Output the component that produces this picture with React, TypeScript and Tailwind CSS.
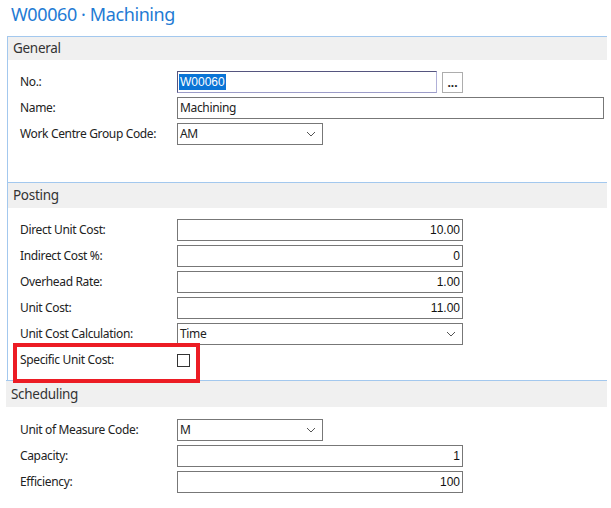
import React from "react";

const label = "text-[12px] text-[#222] font-['Noto_Sans',sans-serif] tracking-[-0.35px]";
const num = "text-[12px] text-[#111] font-['Liberation_Sans',Arial,sans-serif]";

function Chevron() {
  return (
    <svg width="10" height="6" viewBox="0 0 10 6" className="text-[#555]">
      <path d="M1 1l4 4 4-4" fill="none" stroke="currentColor" strokeWidth="1" />
    </svg>
  );
}

function Row({ text, labelW, children }: { text: string; labelW: string; children: React.ReactNode }) {
  return (
    <div className="flex items-center h-[22px]">
      <div className={`${labelW} ${label} shrink-0`}>{text}</div>
      {children}
    </div>
  );
}

function NumBox({ value }: { value: string }) {
  return (
    <div className={`w-[286px] h-[22px] border border-[#777] flex items-center justify-end pr-[2px] ${num}`}>
      {value}
    </div>
  );
}

function Select({ value, w }: { value: string; w: string }) {
  return (
    <div className={`${w} h-[22px] border border-[#777] flex items-center justify-between pl-[2px] pr-[6px]`}>
      <span className={label}>{value}</span>
      <Chevron />
    </div>
  );
}

function Header({ title, h }: { title: string; h: string }) {
  return (
    <div className={`${h} bg-[#f0f0f0] pl-[5px] flex items-center text-[13.5px] tracking-[-0.3px] text-[#333] font-['Noto_Sans',sans-serif]`}>
      {title}
    </div>
  );
}

export default function App() {
  return (
    <div className="relative w-[611px] h-[508px] bg-white overflow-hidden">
      <div className="h-[36px] pl-[11px] pt-[1px] text-[18px] tracking-[-0.4px] text-[#1f7bd4] font-['Noto_Sans',sans-serif]">
        W00060 · Machining
      </div>

      <section className="ml-[7px] w-[600px] h-[146px] border-l border-t border-[#a3c8ee]">
        <Header title="General" h="h-[23px]" />
        <div className="pt-[11px] flex flex-col gap-[4px]">
          <Row text="No.:" labelW="w-[169px] pl-[12px]">
            <div className="w-[260px] h-[22px] border border-[#55557f] border-r-[#b0b0d8] border-b-[#9c9cc8] flex items-center pl-[1px]">
              <span className={`bg-[#0a74d6] text-white px-[1px] leading-[16px] ${num}`}>W00060</span>
            </div>
            <div className="ml-[5px] w-[21px] h-[21px] border border-[#adadad] flex items-end justify-center pb-[3px] text-[12px] font-bold leading-none text-[#222]">
              ...
            </div>
          </Row>
          <Row text="Name:" labelW="w-[169px] pl-[12px]">
            <div className={`w-[427px] h-[22px] border border-[#777] flex items-center pl-[2px] ${label}`}>Machining</div>
          </Row>
          <Row text="Work Centre Group Code:" labelW="w-[169px] pl-[12px]">
            <Select value="AM" w="w-[146px]" />
          </Row>
        </div>
      </section>

      <section className="ml-[7px] w-[600px] h-[198px] border-l border-t border-[#a3c8ee]">
        <Header title="Posting" h="h-[25px]" />
        <div className="pt-[11px] flex flex-col gap-[4px]">
          <Row text="Direct Unit Cost:" labelW="w-[169px] pl-[12px]">
            <NumBox value="10.00" />
          </Row>
          <Row text="Indirect Cost %:" labelW="w-[169px] pl-[12px]">
            <NumBox value="0" />
          </Row>
          <Row text="Overhead Rate:" labelW="w-[169px] pl-[12px]">
            <NumBox value="1.00" />
          </Row>
          <Row text="Unit Cost:" labelW="w-[169px] pl-[12px]">
            <NumBox value="11.00" />
          </Row>
          <Row text="Unit Cost Calculation:" labelW="w-[169px] pl-[12px]">
            <Select value="Time" w="w-[286px]" />
          </Row>
          <Row text="Specific Unit Cost:" labelW="w-[169px] pl-[12px]">
            <div className="w-[13px] h-[13px] border border-[#333]" />
          </Row>
        </div>
      </section>

      <section className="ml-[6px] w-[601px] border-t border-[#a3c8ee]">
        <Header title="Scheduling" h="h-[26px]" />
        <div className="pt-[12px] flex flex-col gap-[4px]">
          <Row text="Unit of Measure Code:" labelW="w-[171px] pl-[14px]">
            <Select value="M" w="w-[146px]" />
          </Row>
          <Row text="Capacity:" labelW="w-[171px] pl-[14px]">
            <NumBox value="1" />
          </Row>
          <Row text="Efficiency:" labelW="w-[171px] pl-[14px]">
            <NumBox value="100" />
          </Row>
        </div>
      </section>

      <div className="absolute left-[13px] top-[343px] w-[187px] h-[40px] border-4 border-[#ec1c24]" />
    </div>
  );
}
